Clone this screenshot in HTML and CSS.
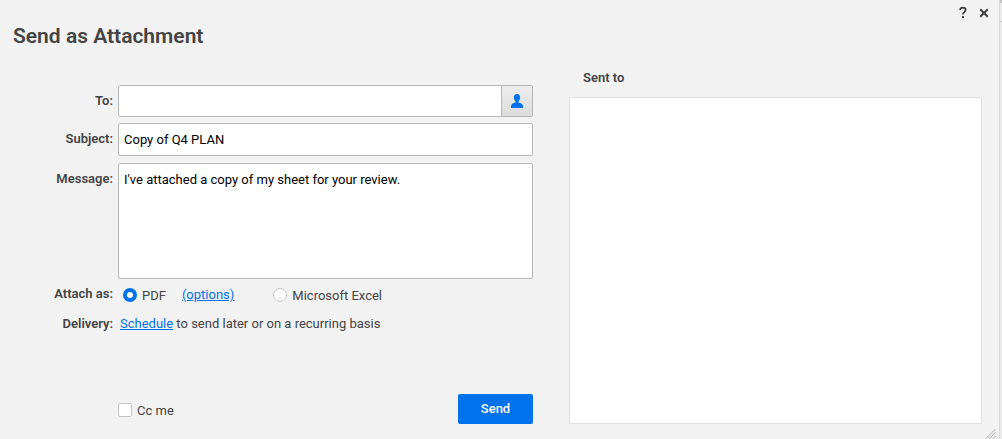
FILE: index.html
```html
<!DOCTYPE html>
<html lang="en">
<head>
<meta charset="utf-8">
<meta name="viewport" content="width=device-width, initial-scale=1">
<title>Send as Attachment</title>
<link rel="stylesheet" href="styles.css">
</head>
<body>
<main class="dialog">
  <header class="dialog-header">
    <h1 class="dialog-title">Send as Attachment</h1>
    <div class="window-controls">
      <button type="button" class="icon-button" aria-label="Help">
        <svg width="10" height="14" viewBox="0 0 10 14" fill="none" aria-hidden="true">
          <path d="M2.2 4.1C2.2 2.5 3.2 1.7 4.8 1.7S7.6 2.6 7.6 4.1C7.6 6.1 4.9 6.2 4.9 8.6" stroke="#404040" stroke-width="1.8"/>
          <rect x="4" y="10" width="2" height="2" fill="#404040"/>
        </svg>
      </button>
      <button type="button" class="icon-button" aria-label="Close">
        <svg width="10" height="10" viewBox="0 0 10 10" fill="none" aria-hidden="true">
          <path d="M1.2 1.2L8.8 8.8M8.8 1.2L1.2 8.8" stroke="#404040" stroke-width="2"/>
        </svg>
      </button>
    </div>
  </header>
  <div class="dialog-body">
    <form class="form">
      <label class="label" for="to">To:</label>
      <div class="recipient">
        <input class="recipient-input" id="to" type="text">
        <button type="button" class="contacts-button" aria-label="Select contacts">
          <svg width="14" height="14" viewBox="0 0 14 14" fill="#0073ec" aria-hidden="true">
            <path d="M7 0C9 0 10.100 1.400 10.100 3.500C10.100 5.300 9.400 6.400 8.500 7.200V8.500C11 9.200 13 10 13 12.200V14H1V12.200C1 10 3 9.200 5.500 8.500V7.200C4.600 6.400 3.900 5.300 3.900 3.500C3.900 1.400 5 0 7 0Z"/>
          </svg>
        </button>
      </div>
      <label class="label" for="subject">Subject:</label>
      <input class="field subject" id="subject" type="text" value="Copy of Q4 PLAN">
      <label class="label" for="message">Message:</label>
      <textarea class="field message" id="message">I've attached a copy of my sheet for your review.</textarea>
      <span class="label attach-label" id="attach-label">Attach as:</span>
      <div class="options" role="radiogroup" aria-labelledby="attach-label">
        <label class="choice"><input class="radio" type="radio" name="format" checked>PDF</label>
        <a class="link options-link" href="#options">(options)</a>
        <label class="choice"><input class="radio" type="radio" name="format">Microsoft Excel</label>
      </div>
      <span class="label delivery-label">Delivery:</span>
      <p class="delivery"><a class="link" href="#schedule">Schedule</a> to send later or on a recurring basis</p>
      <div class="actions">
        <label class="choice cc-choice"><input class="checkbox" type="checkbox">Cc me</label>
        <button type="submit" class="send-button">Send</button>
      </div>
    </form>
    <section class="sent" aria-labelledby="sent-title">
      <h2 class="sent-title" id="sent-title">Sent to</h2>
      <div class="sent-list"></div>
    </section>
  </div>
  <svg class="resize-grip" width="10" height="10" viewBox="0 0 10 10" fill="none" aria-hidden="true">
    <path d="M0 9.500L9.500 0M3.500 9.500L9.500 3.500M7 9.500L9.500 7" stroke="#a6a6a6" stroke-width="1"/>
  </svg>
</main>
<div class="backdrop"></div>
</body>
</html>
```
FILE: styles.css
```css
* {
  box-sizing: border-box;
}

body {
  display: flex;
  min-height: 100vh;
  margin: 0;
  background: #f2f2f2;
  color: #444;
  font: 13px/20px Roboto, sans-serif;
}

button,
input,
textarea {
  font: inherit;
}

.dialog {
  position: relative;
  display: flex;
  flex: 1;
  flex-direction: column;
  min-width: 0;
  padding: 5px 17px 15px 13px;
}

.backdrop {
  width: 3px;
  border-left: 1px solid #d8d8d8;
  background: linear-gradient(#c4c4c4 3px, #ebebeb 3px, #ebebeb 21px, #c8c8c8 21px, #c8c8c8 22px, #ebebeb 22px);
}

.dialog-header {
  display: flex;
  align-items: flex-start;
  justify-content: space-between;
  height: 60px;
}

.dialog-title {
  margin: 17px 0 0;
  font-size: 21px;
  font-weight: 600;
  line-height: 28px;
}

.window-controls {
  display: flex;
  gap: 4px;
  margin-right: -10px;
}

.icon-button {
  display: flex;
  align-items: center;
  justify-content: center;
  width: 17px;
  height: 15px;
  padding: 0;
  border: 0;
  background: none;
}

.dialog-body {
  display: grid;
  flex: 1;
  grid-template-columns: 520fr 413fr;
  gap: 36px;
}

.form {
  display: grid;
  grid-template-columns: 100px 1fr;
  grid-template-rows: 32px 34px 116px auto auto 1fr;
  gap: 6px 5px;
  padding-top: 20px;
}

.label {
  padding-top: 6px;
  font-weight: 600;
  text-align: right;
}

.attach-label {
  padding-top: 0;
  line-height: 18px;
}

.delivery-label {
  padding-top: 0;
  line-height: 22px;
}

.recipient {
  display: flex;
  overflow: hidden;
  border: 1px solid #b5b5b5;
  border-radius: 2px;
}

.recipient-input {
  flex: 1;
  min-width: 0;
  padding: 0 5px;
  border: 0;
  background: #fff;
}

.contacts-button {
  display: flex;
  align-items: center;
  justify-content: center;
  width: 31px;
  padding: 0;
  border: 0;
  border-left: 1px solid #b5b5b5;
  background: linear-gradient(#ededed, #dcdcdc);
}

.field {
  width: 100%;
  padding: 6px 5px;
  border: 1px solid #b5b5b5;
  border-radius: 2px;
  background: #fff;
  color: #000;
}

.subject {
  height: 33px;
}

.message {
  height: 116px;
  resize: none;
}

.options {
  display: flex;
  align-items: center;
  height: 22px;
  padding-left: 5px;
}

.options-link {
  margin: 0 39px 2px 16px;
}

.choice {
  display: flex;
  align-items: center;
  gap: 5px;
}

.cc-choice {
  padding-top: 4px;
}

.link {
  color: #0073ec;
}

.radio,
.checkbox {
  width: 14px;
  height: 14px;
  margin: 0 0 2px;
  border: 1px solid #c4c4c4;
  background: #fff;
  appearance: none;
}

.radio {
  border-radius: 50%;
}

.radio:checked {
  border: 4px solid #0073ec;
}

.checkbox {
  border-radius: 2px;
}

.delivery {
  margin: 0;
  padding-left: 2px;
  line-height: 22px;
}

.actions {
  display: flex;
  grid-column: 2;
  align-items: center;
  align-self: end;
  justify-content: space-between;
}

.send-button {
  width: 75px;
  height: 30px;
  padding: 0;
  border: 0;
  border-radius: 2px;
  background: #0073ec;
  color: #fff;
  font-weight: 500;
}

.sent {
  display: flex;
  flex-direction: column;
}

.sent-title {
  margin: 3px 14px 9px;
  font-size: 13px;
  font-weight: 600;
  line-height: 20px;
}

.sent-list {
  flex: 1;
  border: 1px solid #e0e0e0;
  background: #fff;
}

.resize-grip {
  position: absolute;
  right: 3px;
  bottom: 0;
}
```
